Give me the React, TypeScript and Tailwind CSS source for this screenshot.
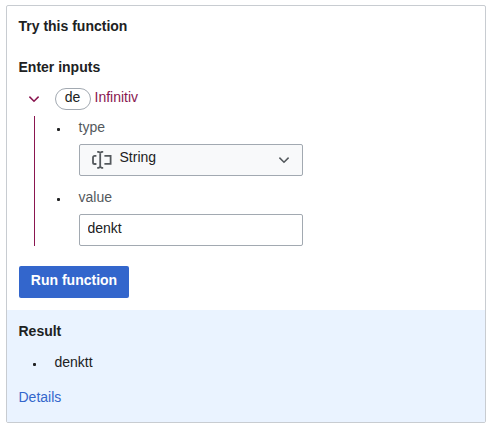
import React from "react";

function Chevron({ className }: { className: string }) {
  return (
    <svg viewBox="0 0 12 12" className={className} fill="none" stroke="currentColor" strokeWidth="1.5">
      <path d="M1.4 3.6 6 8.2l4.6-4.6" />
    </svg>
  );
}

function StringIcon() {
  return (
    <svg viewBox="0 0 20 20" className="ml-3 h-5 w-5 shrink-0 text-[#54595d]" fill="none" stroke="currentColor" strokeWidth="1.8">
      <path d="M4.4 5.9H2.6A1.6 1.6 0 0 0 1 7.5v4.9A1.6 1.6 0 0 0 2.6 14h1.8M12.4 5.9h6.2v7.9h-6.2" />
      <path d="M5.2 1.9h1.4L8.2 2.8 9.8 1.9h1.4M5.2 17.9h1.4l1.6-.9 1.6.9h1.4M8.2 2.4v15" />
    </svg>
  );
}

function Field({ label, children }: { label: string; children: React.ReactNode }) {
  return (
    <li className="flex items-start">
      <span className="mt-[12px] ml-[22px] h-[3px] w-[3px] shrink-0 rounded-[1px] bg-[#202122]" />
      <div className="ml-[19px]">
        <div className="-ml-[0.5px] h-[28px] leading-[22px] text-[#54595d]">{label}</div>
        {children}
      </div>
    </li>
  );
}

export default function App() {
  return (
    <div className="h-[427px] w-[492px] overflow-hidden bg-white pt-[5px] pl-[6px] font-['Liberation_Sans',Arial,sans-serif] text-[14px] leading-[22px] text-[#202122]">
      <section className="flex h-[418px] w-[480px] flex-col overflow-hidden rounded-[2px] border border-[#c8ccd1]">
        <div className="h-[304px] px-3 pt-[9px]">
          <h2 className="-ml-[0.5px] font-bold">Try this function</h2>
          <h3 className="mt-[19px] -ml-[0.5px] font-bold">Enter inputs</h3>
          <div className="mt-[10px] flex h-[22px] items-start">
            <Chevron className="mt-[5px] ml-[9px] h-3 w-3 text-[#8a1650]" />
            <span className="ml-[15px] flex h-[22px] w-9 justify-center rounded-full border border-[#a2a9b1] pr-px leading-[16px]">de</span>
            <span className="ml-[3.5px] leading-[18px] text-[#8a1650]">Infinitiv</span>
          </div>
          <ul className="mt-[6px] ml-[15px] flex h-[130px] flex-col border-l border-[#8a1650]">
            <Field label="type">
              <div className="flex h-8 w-[224px] items-center rounded-[2px] border border-[#a2a9b1] bg-[#f8f9fa]">
                <StringIcon />
                <span className="ml-[7.5px] h-6 leading-[18px]">String</span>
                <Chevron className="mr-3 ml-auto h-3 w-3 text-[#54595d]" />
              </div>
            </Field>
            <li className="h-[10px]" />
            <Field label="value">
              <input
                defaultValue="denkt"
                className="block h-8 w-[224px] rounded-[2px] border border-[#a2a9b1] bg-white px-[7.5px] pb-1 outline-none"
              />
            </Field>
          </ul>
          <button className="mt-5 block h-8 w-[110px] rounded-[2px] bg-[#3366cc] pb-[5px] text-center font-bold text-white">
            Run function
          </button>
        </div>
        <div className="flex-1 bg-[#eaf3ff] px-3 pt-[10px]">
          <h3 className="-ml-[0.5px] font-bold">Result</h3>
          <div className="mt-[9px] flex items-start">
            <span className="mt-[12px] ml-[14px] h-[3px] w-[3px] rounded-[1px] bg-[#202122]" />
            <span className="ml-[18.5px]">denktt</span>
          </div>
          <a className="mt-[13px] -ml-[0.5px] block text-[#3366cc]">Details</a>
        </div>
      </section>
    </div>
  );
}
